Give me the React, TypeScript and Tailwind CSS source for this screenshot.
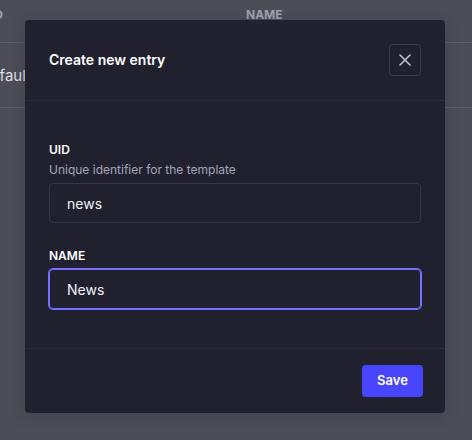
import React from "react";

export default function App() {
  return (
    <div
      className="relative w-[472px] h-[440px] overflow-hidden bg-[#4d4d58]"
      style={{ fontFamily: "Inter, 'Noto Sans', sans-serif" }}
    >
      {/* background table */}
      <div className="flex flex-col">
        <div className="h-[43px] flex items-center border-b border-[#5d5d6a]">
          <div className="w-[255px] -ml-[9px] text-[12px] font-bold text-[#a3a3b1] leading-4 pb-[13px]">ID</div>
          <div className="text-[12px] font-bold text-[#a3a3b1] leading-4 pb-[13px]">NAME</div>
        </div>
        <div className="h-[65px] flex items-center border-b border-[#5d5d6a]">
          <div className="-ml-[20px] text-[15px] text-[#dedee4] leading-5 pt-[1px]">Default</div>
        </div>
      </div>

      {/* modal */}
      <div className="absolute left-[25px] top-[20px] w-[420px] h-[393px] rounded-[4px] bg-[#20202f] shadow-[0_2px_15px_rgba(33,33,52,0.25)] flex flex-col overflow-hidden">
        <div className="h-[81px] shrink-0 flex items-center justify-between pl-6 pr-6 border-b border-[#2c2c44]">
          <h2 className="text-[14px] font-semibold text-white leading-5">Create new entry</h2>
          <button className="w-8 h-8 rounded-[4px] border border-[#3a3a56] flex items-center justify-center">
            <svg width="12" height="12" viewBox="0 0 12 12" fill="none">
              <path d="M1 1L11 11M11 1L1 11" stroke="#c0c0cf" strokeWidth="1.6" strokeLinecap="round" />
            </svg>
          </button>
        </div>

        <div className="flex-1 flex flex-col px-6 pt-[41px] border-b border-[#2c2c44]">
          <label className="text-[12px] font-semibold text-white leading-4">UID</label>
          <p className="mt-1 text-[12px] text-[#a5a5ba] leading-4">Unique identifier for the template</p>
          <div className="mt-[5px] h-10 rounded-[4px] border border-[#34344f] flex items-center pl-[17px] text-[14px] text-[#f2f2f6]">
            news
          </div>
          <label className="mt-[25px] text-[12px] font-semibold text-white leading-4">NAME</label>
          <div className="mt-[5px] h-10 rounded-[4px] border border-[#7472ff] ring-1 ring-[#7472ff] flex items-center pl-[17px] text-[14px] text-[#f2f2f6]">
            News
          </div>
        </div>

        <div className="h-16 shrink-0 flex items-center justify-end pr-[22px]">
          <button className="h-8 w-[61px] rounded-[4px] bg-[#4945ff] text-white text-[13px] font-semibold flex items-center justify-center">
            Save
          </button>
        </div>
      </div>
    </div>
  );
}
